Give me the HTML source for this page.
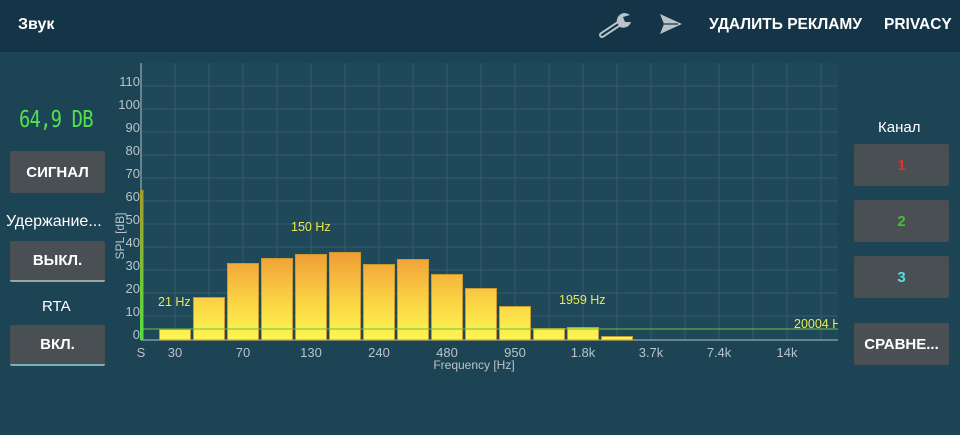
<!DOCTYPE html>
<html><head><meta charset="utf-8"><style>
*{margin:0;padding:0;box-sizing:border-box}
body{width:960px;height:435px;background:#1c4455;font-family:"Liberation Sans",sans-serif;position:relative;overflow:hidden;color:#fff}
.top{position:absolute;left:0;top:0;width:960px;height:52px;background:#143547}
.a{position:absolute;white-space:nowrap}
.btn{position:absolute;background:#4a4f53;border-radius:2px;color:#fff;font-weight:bold;font-size:15px;display:flex;align-items:center;justify-content:center}
.chart{position:absolute;left:141px;top:63px;width:697px;height:277px;background:#1f4858}
.yl{position:absolute;width:40px;text-align:right;font-size:13px;color:#b9c4c9}
.xl{position:absolute;font-size:13px;color:#b9c4c9;transform:translateX(-50%)}
.lbl{position:absolute;font-size:12.5px;color:#eaea50}
</style></head><body>
<div class="top"></div>
<div class="a" style="left:18px;top:16px;font-size:16px;font-weight:bold">Звук</div>
<svg class="a" style="left:596px;top:10px" width="40" height="30" viewBox="0 0 40 30"><path d="M6 25 L24 13" stroke="#b8c4c8" stroke-width="6" stroke-linecap="round"/><path d="M6 25 L24 13" stroke="#143547" stroke-width="2" stroke-linecap="round"/><path d="M21 13 A8 8 0 0 1 34 5 L27 7 L29 12 L35 12 A8 8 0 0 1 24 17 Z" fill="#b8c4c8"/></svg>
<svg class="a" style="left:658px;top:12px" width="26" height="24" viewBox="0 0 26 24"><path d="M2 2 L24 12 L2 22 L6 12 Z" fill="#b8c4c8"/><path d="M6 12 L20 12" stroke="#143547" stroke-width="1.2"/></svg>
<div class="a" style="left:709px;top:16px;font-size:15.5px;font-weight:bold">УДАЛИТЬ РЕКЛАМУ</div>
<div class="a" style="left:884px;top:16px;font-size:15.5px;font-weight:bold">PRIVACY</div>

<div class="a" style="left:19px;top:107px;font-size:23px;color:#4ee24e;font-family:'DejaVu Sans Mono',monospace;letter-spacing:-1px;transform:scaleX(0.82);transform-origin:left">64,9 DB</div>
<div class="btn" style="left:10px;top:151px;width:95px;height:42px">СИГНАЛ</div>
<div class="a" style="left:6px;top:213px;font-size:16px">Удержание...</div>
<div class="btn" style="left:10px;top:241px;width:95px;height:41px;border-bottom:2px solid #9aa5a8">ВЫКЛ.</div>
<div class="a" style="left:42px;top:298px;font-size:15px">RTA</div>
<div class="btn" style="left:10px;top:325px;width:95px;height:41px;border-bottom:2px solid #7fb0b0">ВКЛ.</div>

<div class="a" style="left:878px;top:119px;font-size:15px">Канал</div>
<div class="btn" style="left:854px;top:144px;width:95px;height:42px;color:#e03030">1</div>
<div class="btn" style="left:854px;top:200px;width:95px;height:42px;color:#45c035">2</div>
<div class="btn" style="left:854px;top:256px;width:95px;height:42px;color:#50e0e0">3</div>
<div class="btn" style="left:854px;top:323px;width:95px;height:42px">СРАВНЕ...</div>

<div class="chart"></div>
<svg class="a" style="left:0;top:0" width="960" height="435">
<g stroke="#345d6c" stroke-width="1">
<line x1="141" y1="86" x2="838" y2="86"/><line x1="141" y1="109" x2="838" y2="109"/><line x1="141" y1="132" x2="838" y2="132"/><line x1="141" y1="155" x2="838" y2="155"/><line x1="141" y1="178" x2="838" y2="178"/><line x1="141" y1="201" x2="838" y2="201"/><line x1="141" y1="224" x2="838" y2="224"/><line x1="141" y1="247" x2="838" y2="247"/><line x1="141" y1="270" x2="838" y2="270"/><line x1="141" y1="293" x2="838" y2="293"/><line x1="141" y1="316" x2="838" y2="316"/>
<line x1="175" y1="63" x2="175" y2="340"/><line x1="209" y1="63" x2="209" y2="340"/><line x1="243" y1="63" x2="243" y2="340"/><line x1="277" y1="63" x2="277" y2="340"/><line x1="311" y1="63" x2="311" y2="340"/><line x1="345" y1="63" x2="345" y2="340"/><line x1="379" y1="63" x2="379" y2="340"/><line x1="413" y1="63" x2="413" y2="340"/><line x1="447" y1="63" x2="447" y2="340"/><line x1="481" y1="63" x2="481" y2="340"/><line x1="515" y1="63" x2="515" y2="340"/><line x1="549" y1="63" x2="549" y2="340"/><line x1="583" y1="63" x2="583" y2="340"/><line x1="617" y1="63" x2="617" y2="340"/><line x1="651" y1="63" x2="651" y2="340"/><line x1="685" y1="63" x2="685" y2="340"/><line x1="719" y1="63" x2="719" y2="340"/><line x1="753" y1="63" x2="753" y2="340"/><line x1="787" y1="63" x2="787" y2="340"/><line x1="821" y1="63" x2="821" y2="340"/>
</g>
<line x1="141" y1="63" x2="141" y2="340" stroke="#7f99a3" stroke-width="1.5"/>
<line x1="141" y1="340" x2="838" y2="340" stroke="#7f99a3" stroke-width="1.5"/>
<defs><linearGradient id="g" x1="0" y1="0" x2="0" y2="1"><stop offset="0" stop-color="#a89a30"/><stop offset="1" stop-color="#50e040"/></linearGradient>
<linearGradient id="b" gradientUnits="userSpaceOnUse" x1="0" y1="340" x2="0" y2="250"><stop offset="0" stop-color="#fdf752"/><stop offset="0.4" stop-color="#fbd645"/><stop offset="1" stop-color="#f09a35"/></linearGradient></defs>
<g fill="url(#b)" stroke="#c99a30" stroke-width="1">
<rect x="159.5" y="329.5" width="31" height="10.5"/><rect x="193.5" y="297.5" width="31" height="42.5"/><rect x="227.5" y="263.5" width="31" height="76.5"/><rect x="261.5" y="258.5" width="31" height="81.5"/><rect x="295.5" y="254.5" width="31" height="85.5"/><rect x="329.5" y="252.5" width="31" height="87.5"/><rect x="363.5" y="264.5" width="31" height="75.5"/><rect x="397.5" y="259.5" width="31" height="80.5"/><rect x="431.5" y="274.5" width="31" height="65.5"/><rect x="465.5" y="288.5" width="31" height="51.5"/><rect x="499.5" y="306.5" width="31" height="33.5"/><rect x="533.5" y="328.5" width="31" height="11.5"/><rect x="567.5" y="327.5" width="31" height="12.5"/><rect x="601.5" y="336.5" width="31" height="3.5"/>
</g>
<line x1="141" y1="329" x2="838" y2="329" stroke="#6cc040" stroke-width="1"/>
<rect x="140" y="190" width="3.5" height="150" fill="url(#g)"/>
<text x="124" y="236" transform="rotate(-90 124 236)" fill="#b9c4c9" font-size="12" font-family="Liberation Sans" text-anchor="middle">SPL [dB]</text>
</svg>
<div class="yl" style="left:100px;top:74px">110</div><div class="yl" style="left:100px;top:97px">100</div><div class="yl" style="left:100px;top:120px">90</div><div class="yl" style="left:100px;top:143px">80</div><div class="yl" style="left:100px;top:166px">70</div><div class="yl" style="left:100px;top:189px">60</div><div class="yl" style="left:100px;top:212px">50</div><div class="yl" style="left:100px;top:235px">40</div><div class="yl" style="left:100px;top:258px">30</div><div class="yl" style="left:100px;top:281px">20</div><div class="yl" style="left:100px;top:304px">10</div><div class="yl" style="left:100px;top:327px">0</div>
<div class="xl" style="left:141px;top:345px">S</div><div class="xl" style="left:175px;top:345px">30</div><div class="xl" style="left:243px;top:345px">70</div><div class="xl" style="left:311px;top:345px">130</div><div class="xl" style="left:379px;top:345px">240</div><div class="xl" style="left:447px;top:345px">480</div><div class="xl" style="left:515px;top:345px">950</div><div class="xl" style="left:583px;top:345px">1.8k</div><div class="xl" style="left:651px;top:345px">3.7k</div><div class="xl" style="left:719px;top:345px">7.4k</div><div class="xl" style="left:787px;top:345px">14k</div>
<div class="xl" style="left:474px;top:358px;font-size:12px">Frequency [Hz]</div>
<div class="lbl" style="left:158px;top:295px">21 Hz</div>
<div class="lbl" style="left:291px;top:220px">150 Hz</div>
<div class="lbl" style="left:559px;top:293px">1959 Hz</div>
<div class="a" style="left:794px;top:317px;width:44px;overflow:hidden;font-size:12.5px;color:#eaea50">20004 Hz</div>
</body></html>
